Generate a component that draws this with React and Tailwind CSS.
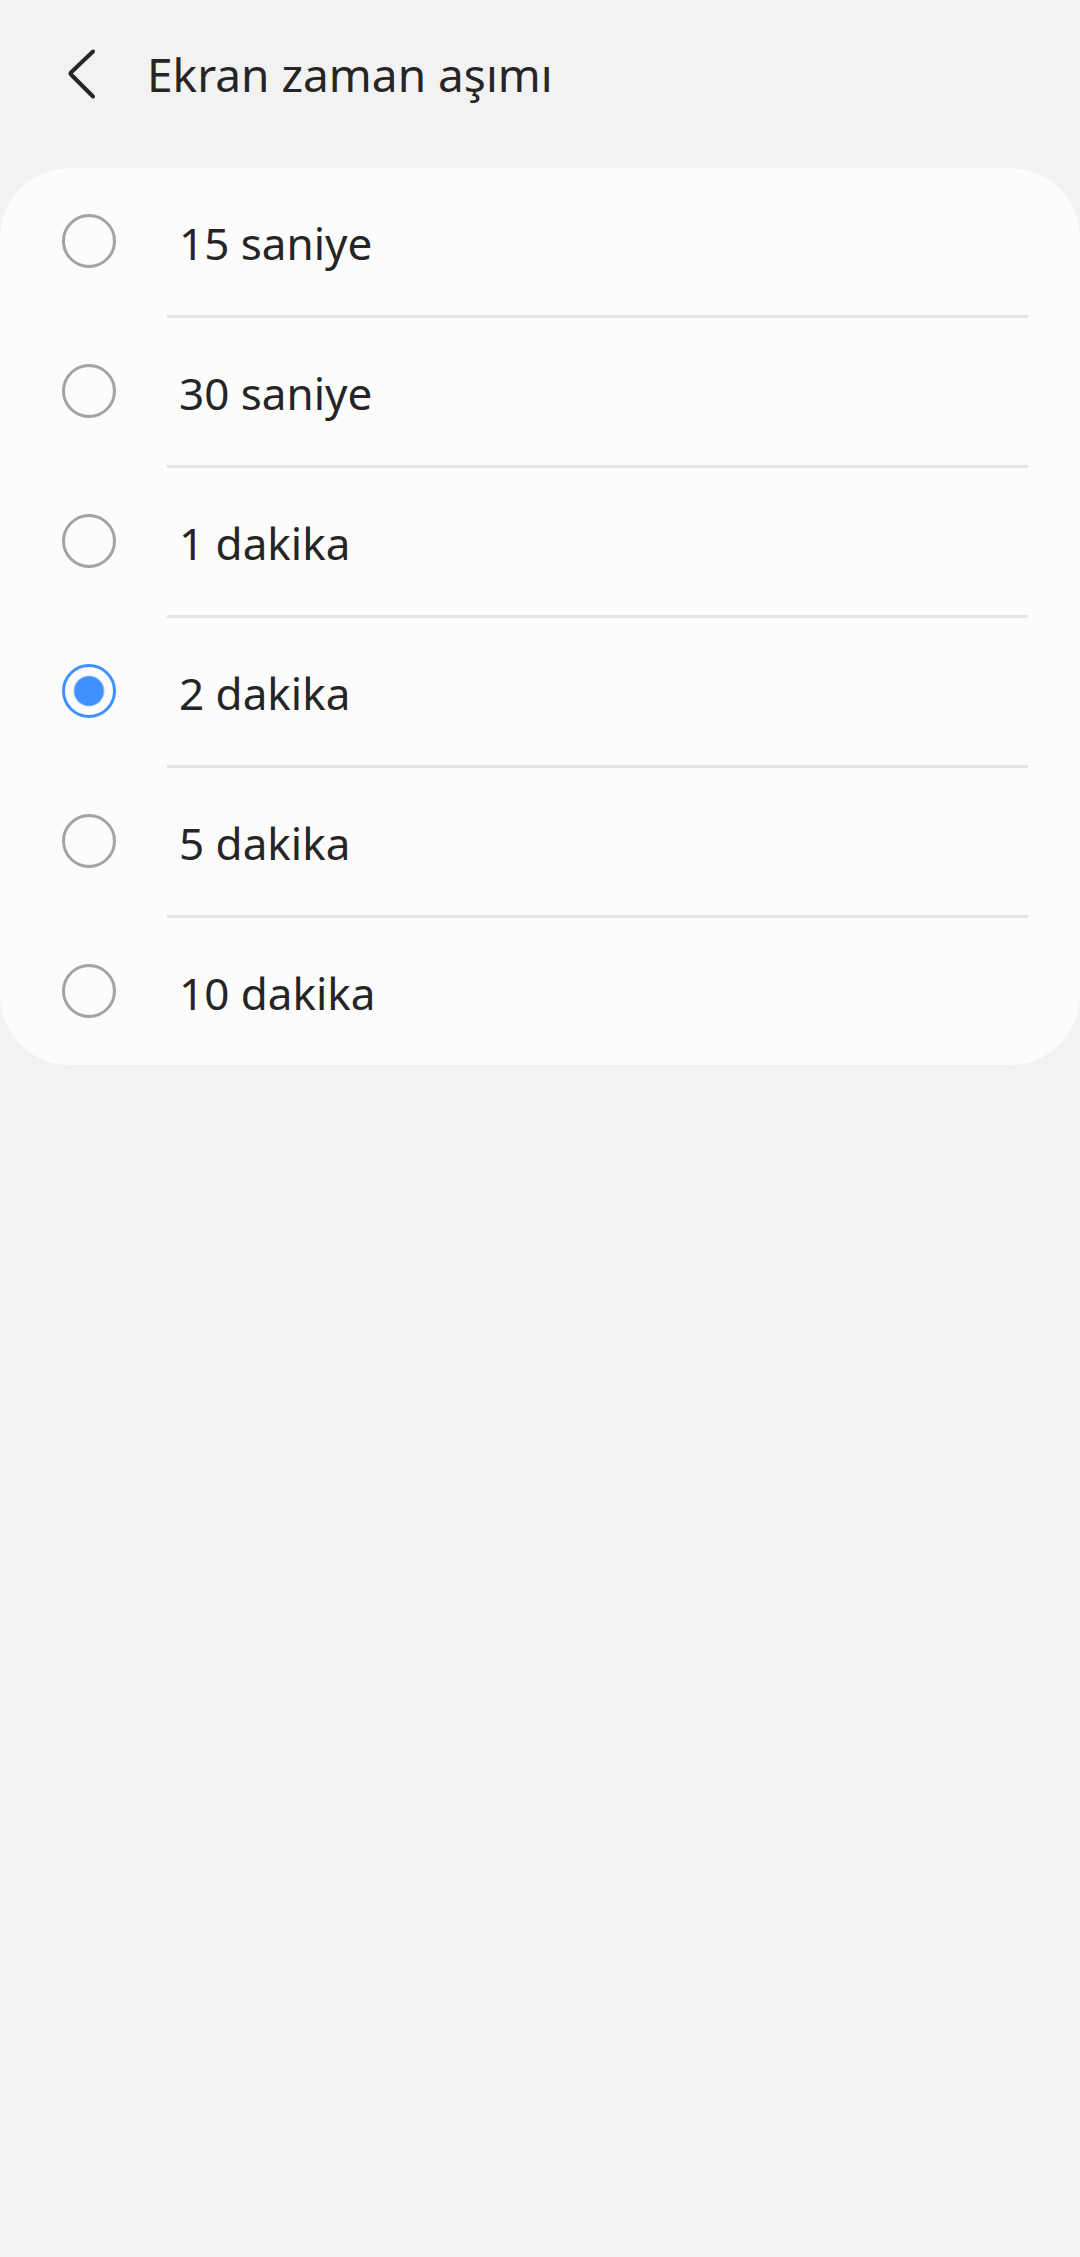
import { useState } from "react";

const options = ["15 saniye", "30 saniye", "1 dakika", "2 dakika", "5 dakika", "10 dakika"];

export default function App() {
  const [selected, setSelected] = useState("2 dakika");
  return (
    <div className="min-h-screen bg-[#f2f2f2] font-['Noto_Sans',sans-serif] text-[#252525]">
      <header className="flex h-[168px] items-start pt-[42px] pl-[60px]">
        <button type="button" aria-label="Geri" className="flex h-16 w-11 items-center justify-center">
          <svg width="44" height="64" viewBox="0 0 44 64" fill="none" stroke="currentColor" strokeWidth="4" strokeLinecap="round" strokeLinejoin="round">
            <path d="M33 9.5 L11 30.5 Q10 31.5 11 32.5 L33 54.5" />
          </svg>
        </button>
        <h1 className="ml-[43px] text-[46px] leading-[64px]">Ekran zaman aşımı</h1>
      </header>
      <main className="rounded-[70px] bg-[#fcfcfc]">
        {options.map((option) => (
          <label key={option} className="group flex h-[150px] cursor-pointer pl-[62px] last:h-[147px]">
            <input
              type="radio"
              name="timeout"
              value={option}
              checked={selected === option}
              onChange={() => setSelected(option)}
              className="mt-[46px] size-[54px] shrink-0 appearance-none rounded-full border-3 border-[#a3a3a3] checked:border-[#3e91ff] checked:bg-[radial-gradient(circle,#3e91ff_14px,transparent_16px)]"
            />
            <span className="mr-[52px] ml-[51px] flex-1 border-b-3 border-[#e4e4e4] pt-[43px] pl-3 text-[44px] leading-[64px] group-last:border-b-0">
              {option}
            </span>
          </label>
        ))}
      </main>
    </div>
  );
}
